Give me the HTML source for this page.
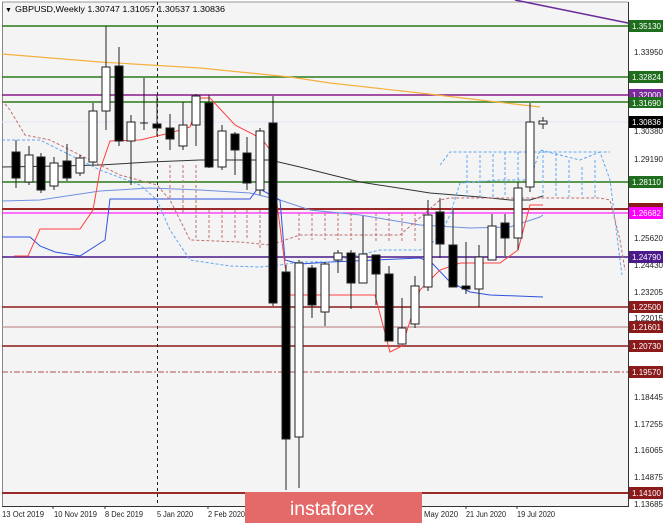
<!DOCTYPE html>
<html><head><meta charset="utf-8"><style>
html,body{margin:0;padding:0;background:#fff;}
body{width:665px;height:523px;overflow:hidden;position:relative;font-family:"Liberation Sans",sans-serif;}
svg{position:absolute;left:0;top:0;}
.lb{font-size:8.5px;font-family:"Liberation Sans",sans-serif;}
</style></head><body>
<svg width="665" height="523" viewBox="0 0 665 523" xmlns="http://www.w3.org/2000/svg">
<rect x="0" y="0" width="665" height="523" fill="#ffffff"/>
<rect x="2" y="2" width="626" height="504" fill="#f4f4f4"/>
<line x1="2" y1="2" x2="628" y2="2" stroke="#999" stroke-width="1"/>
<line x1="2.5" y1="2" x2="2.5" y2="506" stroke="#888" stroke-width="1"/>
<line x1="628.5" y1="2" x2="628.5" y2="507" stroke="#333" stroke-width="1"/>
<line x1="2" y1="506.5" x2="628" y2="506.5" stroke="#333" stroke-width="1"/>
<line x1="515" y1="0" x2="628" y2="23" stroke="#6a2a9a" stroke-width="1.5"/>
<g stroke-width="1.6">
<line x1="2" y1="26" x2="628" y2="26" stroke="#2a7a1a"/>
<line x1="2" y1="77" x2="628" y2="77" stroke="#2a7a1a"/>
<line x1="2" y1="95" x2="628" y2="95" stroke="#8a1a8a"/>
<line x1="2" y1="102" x2="628" y2="102" stroke="#2a7a1a"/>
<line x1="2" y1="122" x2="628" y2="122" stroke="#e4e4f4" stroke-width="1"/>
<line x1="2" y1="182" x2="628" y2="182" stroke="#2a7a1a"/>
<line x1="2" y1="209" x2="628" y2="209" stroke="#9a2a2a" stroke-width="2"/>
<line x1="2" y1="213" x2="628" y2="213" stroke="#ff22ff" stroke-width="1.2"/>
<line x1="2" y1="257" x2="628" y2="257" stroke="#4a1a8a"/>
<line x1="2" y1="307" x2="628" y2="307" stroke="#8b1a1a"/>
<line x1="2" y1="327" x2="628" y2="327" stroke="#c09090" stroke-width="1.2"/>
<line x1="2" y1="346" x2="628" y2="346" stroke="#8b1a1a"/>
<line x1="2" y1="372" x2="628" y2="372" stroke="#b05050" stroke-width="1" stroke-dasharray="6,2,2,2"/>
<line x1="2" y1="493" x2="628" y2="493" stroke="#9a2a2a" stroke-width="2"/>
</g>
<line x1="157.5" y1="2" x2="157.5" y2="506" stroke="#222" stroke-width="1" stroke-dasharray="3,3"/>
<polyline fill="none" stroke="#f5b040" stroke-width="1.2" points="2,54 100,62 200,68 290,77 330,83 420,93 480,100 540,107"/>
<polyline fill="none" stroke="#333" stroke-width="1" points="2,167 60,166 100,165 150,162 200,160 270,160 300,167 360,182 430,193 480,197 510,200 530,200 543,196"/>
<polyline fill="none" stroke="#7090e0" stroke-width="1" points="2,201 40,200 100,191 150,188 200,190 250,193 280,200 310,210 360,215 420,225 470,228 510,227 540,217 543,215"/>
<polyline fill="none" stroke="#3050e0" stroke-width="1" points="2,237 30,237 40,246 55,252 80,256 105,240 110,199 250,199 258,188 280,200 285,260 300,264 330,262 420,258 432,263 450,282 470,292 490,295 543,297"/>
<polyline fill="none" stroke="#ff4040" stroke-width="1" points="14,256 28,256 40,229 80,229 93,210 100,170 110,141 140,140 170,133 190,127 200,98 210,98 235,125 262,139 270,150 285,265 290,295 375,295 390,352 402,346 420,290 430,280 440,270 460,263 500,263 518,250 530,205 543,205"/>
<g fill="none" stroke-dasharray="3,2" stroke-width="1">
<polyline stroke="#60a8f0" points="2,140 40,140 60,150 80,160 100,170 140,185 157,200 170,230 190,260 230,266 260,267 280,265 300,262 330,262 380,250 420,250 430,245 440,235 450,215 460,183 500,180 530,180 540,150 580,160 600,152 610,180 620,260 622,275"/>
<polyline stroke="#c07070" points="2,100 10,110 25,135 50,140 80,155 120,175 157,185 170,200 190,240 240,242 270,245 300,235 400,235 440,200 450,198 600,198 610,200 620,240 625,270"/>
<polyline stroke="#60a8f0" points="440,165 450,152 610,152"/>
</g>
<g stroke="#60a8f0" stroke-dasharray="3,2" stroke-width="1">
<line x1="467" y1="155" x2="467" y2="197"/><line x1="480" y1="155" x2="480" y2="197"/><line x1="493" y1="154" x2="493" y2="197"/><line x1="505" y1="152" x2="505" y2="197"/><line x1="518" y1="152" x2="518" y2="197"/><line x1="543" y1="150" x2="543" y2="197"/><line x1="556" y1="153" x2="556" y2="197"/><line x1="569" y1="160" x2="569" y2="197"/><line x1="582" y1="167" x2="582" y2="197"/><line x1="595" y1="160" x2="595" y2="197"/>
</g>
<g stroke="#c07070" stroke-dasharray="3,2" stroke-width="1">
<line x1="170" y1="165" x2="170" y2="200"/><line x1="183" y1="165" x2="183" y2="215"/><line x1="196" y1="165" x2="196" y2="240"/><line x1="209" y1="210" x2="209" y2="240"/><line x1="222" y1="210" x2="222" y2="240"/><line x1="235" y1="210" x2="235" y2="240"/><line x1="247" y1="210" x2="247" y2="240"/><line x1="260" y1="210" x2="260" y2="250"/><line x1="299" y1="213" x2="299" y2="240"/><line x1="312" y1="213" x2="312" y2="240"/><line x1="325" y1="213" x2="325" y2="240"/><line x1="338" y1="213" x2="338" y2="240"/><line x1="351" y1="213" x2="351" y2="240"/><line x1="376" y1="213" x2="376" y2="242"/><line x1="389" y1="213" x2="389" y2="242"/><line x1="402" y1="213" x2="402" y2="242"/><line x1="415" y1="213" x2="415" y2="242"/>
</g>
<g stroke="#222" stroke-width="1">
<line x1="16" y1="140" x2="16" y2="188"/><rect x="12" y="152" width="8" height="26" fill="#000"/>
<line x1="29" y1="146" x2="29" y2="185"/><rect x="25" y="155" width="8" height="27" fill="#fff"/>
<line x1="41" y1="153" x2="41" y2="193"/><rect x="37" y="157" width="8" height="33" fill="#000"/>
<line x1="54" y1="157" x2="54" y2="190"/><rect x="50" y="163" width="8" height="23" fill="#fff"/>
<line x1="67" y1="144" x2="67" y2="181"/><rect x="63" y="161" width="8" height="17" fill="#000"/>
<line x1="80" y1="155" x2="80" y2="176"/><rect x="76" y="158" width="8" height="15" fill="#fff"/>
<line x1="93" y1="103" x2="93" y2="165"/><rect x="89" y="111" width="8" height="51" fill="#fff"/>
<line x1="106" y1="26" x2="106" y2="130"/><rect x="102" y="67" width="8" height="44" fill="#fff"/>
<line x1="119" y1="47" x2="119" y2="146"/><rect x="115" y="66" width="8" height="75" fill="#000"/>
<line x1="131" y1="115" x2="131" y2="185"/><rect x="127" y="122" width="8" height="19" fill="#fff"/>
<line x1="144" y1="78" x2="144" y2="130"/><line x1="140" y1="123" x2="148" y2="123"/>
<line x1="157" y1="95" x2="157" y2="136"/><rect x="153" y="124" width="8" height="4" fill="#000"/>
<line x1="170" y1="114" x2="170" y2="150"/><rect x="166" y="128" width="8" height="11" fill="#000"/>
<line x1="183" y1="102" x2="183" y2="150"/><rect x="179" y="125" width="8" height="21" fill="#fff"/>
<line x1="196" y1="94" x2="196" y2="146"/><rect x="192" y="96" width="8" height="29" fill="#fff"/>
<line x1="209" y1="95" x2="209" y2="168"/><rect x="205" y="103" width="8" height="64" fill="#000"/>
<line x1="222" y1="125" x2="222" y2="170"/><rect x="218" y="131" width="8" height="36" fill="#fff"/>
<line x1="235" y1="132" x2="235" y2="175"/><rect x="231" y="134" width="8" height="16" fill="#000"/>
<line x1="247" y1="137" x2="247" y2="190"/><rect x="243" y="153" width="8" height="30" fill="#000"/>
<line x1="260" y1="128" x2="260" y2="195"/><rect x="256" y="131" width="8" height="59" fill="#fff"/>
<line x1="273" y1="96" x2="273" y2="306"/><rect x="269" y="123" width="8" height="180" fill="#000"/>
<line x1="286" y1="265" x2="286" y2="490"/><rect x="282" y="272" width="8" height="167" fill="#000"/>
<line x1="299" y1="260" x2="299" y2="488"/><rect x="295" y="263" width="8" height="174" fill="#fff"/>
<line x1="312" y1="265" x2="312" y2="318"/><rect x="308" y="268" width="8" height="37" fill="#000"/>
<line x1="325" y1="262" x2="325" y2="326"/><rect x="321" y="264" width="8" height="48" fill="#fff"/>
<line x1="338" y1="250" x2="338" y2="273"/><rect x="334" y="253" width="8" height="7" fill="#fff"/>
<line x1="351" y1="250" x2="351" y2="309"/><rect x="347" y="253" width="8" height="30" fill="#000"/>
<line x1="363" y1="216" x2="363" y2="283"/><rect x="359" y="254" width="8" height="29" fill="#fff"/>
<line x1="376" y1="255" x2="376" y2="305"/><rect x="372" y="255" width="8" height="19" fill="#000"/>
<line x1="389" y1="266" x2="389" y2="341"/><rect x="385" y="274" width="8" height="67" fill="#000"/>
<line x1="402" y1="298" x2="402" y2="344"/><rect x="398" y="328" width="8" height="16" fill="#fff"/>
<line x1="415" y1="276" x2="415" y2="328"/><rect x="411" y="286" width="8" height="38" fill="#fff"/>
<line x1="428" y1="200" x2="428" y2="291"/><rect x="424" y="215" width="8" height="72" fill="#fff"/>
<line x1="440" y1="198" x2="440" y2="258"/><rect x="436" y="212" width="8" height="32" fill="#000"/>
<line x1="453" y1="210" x2="453" y2="287"/><rect x="449" y="245" width="8" height="42" fill="#000"/>
<line x1="466" y1="242" x2="466" y2="294"/><rect x="462" y="286" width="8" height="3" fill="#000"/>
<line x1="479" y1="245" x2="479" y2="307"/><rect x="475" y="257" width="8" height="32" fill="#fff"/>
<line x1="492" y1="214" x2="492" y2="260"/><rect x="488" y="226" width="8" height="34" fill="#fff"/>
<line x1="505" y1="214" x2="505" y2="256"/><rect x="501" y="223" width="8" height="15" fill="#000"/>
<line x1="518" y1="182" x2="518" y2="250"/><rect x="514" y="188" width="8" height="50" fill="#fff"/>
<line x1="530" y1="103" x2="530" y2="192"/><rect x="526" y="122" width="8" height="65" fill="#fff"/>
<line x1="543" y1="117" x2="543" y2="129"/><rect x="539" y="121" width="8" height="3" fill="#fff"/>
</g>
<text x="5" y="12" font-size="7" fill="#000">▼</text>
<text x="15" y="12" font-size="8.5" fill="#000" textLength="210" lengthAdjust="spacingAndGlyphs">GBPUSD,Weekly  1.30747 1.31057 1.30537 1.30836</text>
<g class="lb" fill="#222">
<text x="634" y="55" textLength="29" lengthAdjust="spacingAndGlyphs">1.33950</text>
<text x="634" y="134" textLength="29" lengthAdjust="spacingAndGlyphs">1.30380</text>
<text x="634" y="162" textLength="29" lengthAdjust="spacingAndGlyphs">1.29190</text>
<text x="634" y="241" textLength="29" lengthAdjust="spacingAndGlyphs">1.25620</text>
<text x="634" y="268" textLength="29" lengthAdjust="spacingAndGlyphs">1.24430</text>
<text x="634" y="295" textLength="29" lengthAdjust="spacingAndGlyphs">1.23205</text>
<text x="634" y="321" textLength="29" lengthAdjust="spacingAndGlyphs">1.22015</text>
<text x="634" y="400" textLength="29" lengthAdjust="spacingAndGlyphs">1.18445</text>
<text x="634" y="427" textLength="29" lengthAdjust="spacingAndGlyphs">1.17255</text>
<text x="634" y="453" textLength="29" lengthAdjust="spacingAndGlyphs">1.16065</text>
<text x="634" y="480" textLength="29" lengthAdjust="spacingAndGlyphs">1.14875</text>
<text x="634" y="507" textLength="29" lengthAdjust="spacingAndGlyphs">1.13685</text>
</g>
<g class="lb">
<rect x="629" y="20" width="34" height="12" fill="#1e6e1e"/><text x="632" y="29" fill="#fff" textLength="29" lengthAdjust="spacingAndGlyphs">1.35130</text>
<rect x="629" y="71" width="34" height="12" fill="#1e6e1e"/><text x="632" y="80" fill="#fff" textLength="29" lengthAdjust="spacingAndGlyphs">1.32824</text>
<rect x="629" y="89" width="34" height="12" fill="#7a2a9a"/><text x="632" y="98" fill="#fff" textLength="29" lengthAdjust="spacingAndGlyphs">1.32000</text>
<rect x="629" y="97" width="34" height="11" fill="#1e6e1e"/><text x="632" y="106" fill="#fff" textLength="29" lengthAdjust="spacingAndGlyphs">1.31690</text>
<rect x="629" y="116" width="34" height="12" fill="#000"/><text x="632" y="125" fill="#fff" textLength="29" lengthAdjust="spacingAndGlyphs">1.30836</text>
<rect x="629" y="176" width="34" height="12" fill="#1e6e1e"/><text x="632" y="185" fill="#fff" textLength="29" lengthAdjust="spacingAndGlyphs">1.28110</text>
<rect x="629" y="203" width="34" height="8" fill="#8b1a1a"/>
<rect x="629" y="207" width="34" height="12" fill="#ff00ff"/><text x="632" y="216" fill="#fff" textLength="29" lengthAdjust="spacingAndGlyphs">1.26682</text>
<rect x="629" y="251" width="34" height="12" fill="#4a1a8a"/><text x="632" y="260" fill="#fff" textLength="29" lengthAdjust="spacingAndGlyphs">1.24790</text>
<rect x="629" y="301" width="34" height="12" fill="#8b1a1a"/><text x="632" y="310" fill="#fff" textLength="29" lengthAdjust="spacingAndGlyphs">1.22500</text>
<rect x="629" y="321" width="34" height="12" fill="#8b1a1a"/><text x="632" y="330" fill="#fff" textLength="29" lengthAdjust="spacingAndGlyphs">1.21601</text>
<rect x="629" y="340" width="34" height="12" fill="#8b1a1a"/><text x="632" y="349" fill="#fff" textLength="29" lengthAdjust="spacingAndGlyphs">1.20730</text>
<rect x="629" y="366" width="34" height="12" fill="#8b1a1a"/><text x="632" y="375" fill="#fff" textLength="29" lengthAdjust="spacingAndGlyphs">1.19570</text>
<rect x="629" y="487" width="34" height="12" fill="#8b1a1a"/><text x="632" y="496" fill="#fff" textLength="29" lengthAdjust="spacingAndGlyphs">1.14100</text>
</g>
<g stroke="#333"><line x1="53" y1="506" x2="53" y2="509"/><line x1="105" y1="506" x2="105" y2="509"/><line x1="208" y1="506" x2="208" y2="509"/><line x1="466" y1="506" x2="466" y2="509"/><line x1="517" y1="506" x2="517" y2="509"/></g>
<g font-size="8" fill="#222" font-family="Liberation Sans, sans-serif">
<text x="2" y="517" textLength="42" lengthAdjust="spacingAndGlyphs">13 Oct 2019</text>
<text x="54" y="517" textLength="43" lengthAdjust="spacingAndGlyphs">10 Nov 2019</text>
<text x="105" y="517" textLength="38" lengthAdjust="spacingAndGlyphs">8 Dec 2019</text>
<text x="157" y="517" textLength="36" lengthAdjust="spacingAndGlyphs">5 Jan 2020</text>
<text x="208" y="517" textLength="37" lengthAdjust="spacingAndGlyphs">2 Feb 2020</text>
<text x="424" y="517" textLength="34" lengthAdjust="spacingAndGlyphs">May 2020</text>
<text x="466" y="517" textLength="40" lengthAdjust="spacingAndGlyphs">21 Jun 2020</text>
<text x="517" y="517" textLength="38" lengthAdjust="spacingAndGlyphs">19 Jul 2020</text>
</g>
<rect x="245" y="492" width="177" height="31" fill="#e46a6a"/>
<text x="332" y="515" font-size="19" fill="#fff" text-anchor="middle" textLength="84" lengthAdjust="spacingAndGlyphs" font-family="Liberation Sans, sans-serif">instaforex</text>
</svg>
</body></html>
